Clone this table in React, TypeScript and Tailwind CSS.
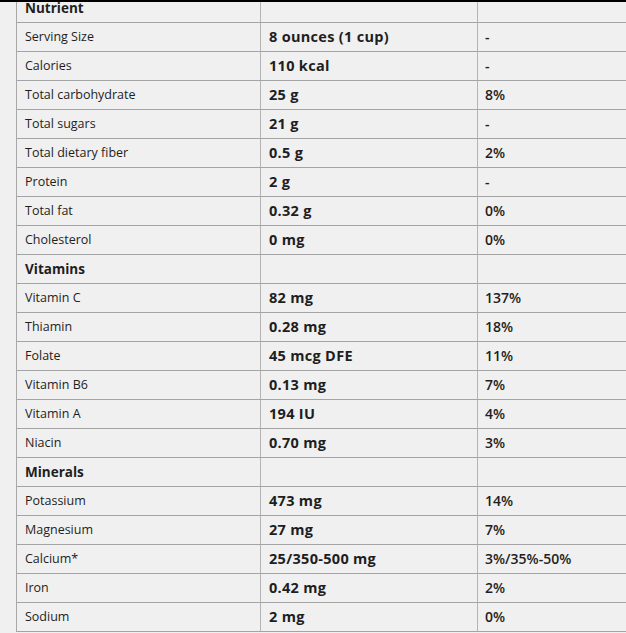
import React from 'react';

type Row = { label: string; value?: string; dv?: string; section?: boolean };

const rows: Row[] = [
  { label: 'Nutrient', section: true },
  { label: 'Serving Size', value: '8 ounces (1 cup)', dv: '-' },
  { label: 'Calories', value: '110 kcal', dv: '-' },
  { label: 'Total carbohydrate', value: '25 g', dv: '8%' },
  { label: 'Total sugars', value: '21 g', dv: '-' },
  { label: 'Total dietary fiber', value: '0.5 g', dv: '2%' },
  { label: 'Protein', value: '2 g', dv: '-' },
  { label: 'Total fat', value: '0.32 g', dv: '0%' },
  { label: 'Cholesterol', value: '0 mg', dv: '0%' },
  { label: 'Vitamins', section: true },
  { label: 'Vitamin C', value: '82 mg', dv: '137%' },
  { label: 'Thiamin', value: '0.28 mg', dv: '18%' },
  { label: 'Folate', value: '45 mcg DFE', dv: '11%' },
  { label: 'Vitamin B6', value: '0.13 mg', dv: '7%' },
  { label: 'Vitamin A', value: '194 IU', dv: '4%' },
  { label: 'Niacin', value: '0.70 mg', dv: '3%' },
  { label: 'Minerals', section: true },
  { label: 'Potassium', value: '473 mg', dv: '14%' },
  { label: 'Magnesium', value: '27 mg', dv: '7%' },
  { label: 'Calcium*', value: '25/350-500 mg', dv: '3%/35%-50%' },
  { label: 'Iron', value: '0.42 mg', dv: '2%' },
  { label: 'Sodium', value: '2 mg', dv: '0%' },
];

const App = () => {
  return (
    <div
      className="w-[626px] h-[633px] overflow-hidden bg-[#f0f0f0] text-[#1e1e1e]"
      style={{ fontFamily: '"Open Sans", "DejaVu Sans", sans-serif' }}
    >
      <div className="relative z-10 h-[2px] bg-black" />
      {/* Table, first row tucked under the top edge */}
      <div className="-mt-[8px] ml-[16px] border-l border-[#a8a8a8]">
        {rows.map((r, i) => (
          <div
            key={i}
            className="grid grid-cols-[243px_217px_150px] h-[29px] border-b border-[#a4a4a4]"
          >
            <div
              className={
                'flex items-center pl-[8px] pt-[1px] ' +
                (r.section ? 'text-[13.5px] font-bold' : 'text-[12.5px]')
              }
            >
              {r.label}
            </div>
            <div className="flex items-center pl-[8px] border-l border-[#b4b4b4] text-[14.5px] font-bold tracking-[0.3px]">
              {r.value}
            </div>
            <div className="flex items-center pl-[7px] pb-[2px] border-l border-[#b4b4b4] text-[14px] font-semibold">
              {r.dv}
            </div>
          </div>
        ))}
      </div>
    </div>
  );
};

export default App;
